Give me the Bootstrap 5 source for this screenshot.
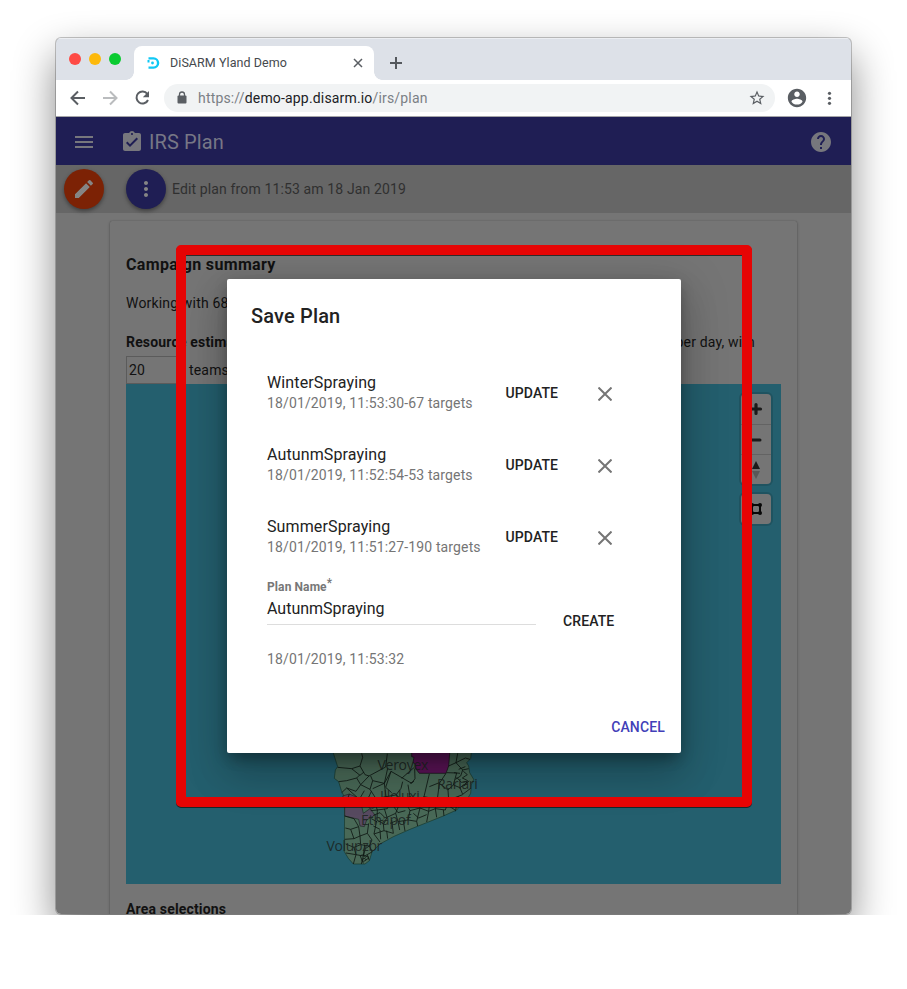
<!DOCTYPE html>
<html lang="en">
<head>
<meta charset="utf-8">
<title>DiSARM Yland Demo</title>
<link rel="stylesheet" href="https://cdn.jsdelivr.net/npm/bootstrap@5.3.0/dist/css/bootstrap.min.css">
<style>
body{background:#fff;font-family:Roboto,sans-serif;color:#111;overflow:hidden}
svg{display:block;flex:none}
.stage{height:915px;padding:38px 56px 0;overflow:hidden}
.browser{width:795px;height:876px;border-radius:5px;overflow:visible;box-shadow:0 0 0 1px rgba(0,0,0,.22),0 18px 42px rgba(0,0,0,.48)}
.browser-clip{height:876px;border-radius:5px;overflow:hidden;background:#757575}
.tabstrip{height:42px;background:#dde1e8;box-shadow:inset 0 1px #eceef2;padding-left:13px}
.lights{gap:8px;height:42px;width:65px}
.light{width:12px;height:12px;border-radius:50%}
.page-tab{width:240px;height:34px;margin-top:8px;background:#fff;border-radius:8px 8px 0 0;padding:0 10px 0 13px;font-size:12.5px;letter-spacing:.07px;color:#45494d}
.page-tab::before,.page-tab::after{content:"";position:absolute;bottom:0;width:8px;height:8px}
.page-tab::before{left:-8px;background:radial-gradient(circle at 0 0,transparent 7.5px,#fff 8px)}
.page-tab::after{right:-8px;background:radial-gradient(circle at 100% 0,transparent 7.5px,#fff 8px)}
.toolbar{height:37px;background:#fff;border-bottom:1px solid #a5a5a8;padding-left:13px}
.omnibox{width:611px;height:28px;border-radius:14px;background:#f1f3f4;margin-left:13px;padding:0 9px 0 13px;font-size:14px;letter-spacing:.17px;color:#7b8085}
.omnibox b{font-weight:400;color:#202124}
.appbar{height:48px;background:#1f1e54;padding:1px 18px 0 16px;color:#777786;font-size:20px;letter-spacing:.1px}
.subbar{height:48px;background:#666;padding-left:8px;font-size:14px;letter-spacing:.13px;color:#303030}
.fab{width:40px;height:40px;border-radius:50%;box-shadow:0 2px 4px rgba(0,0,0,.4)}
.sheet{width:687px;height:720px;margin:8px 0 0 54px;padding:0 16px;border-radius:2px;background:#757575;box-shadow:0 1px 3px rgba(0,0,0,.3),0 0 1px rgba(0,0,0,.3);font-size:14px;letter-spacing:.17px;line-height:20px}
.sheet h2{font-size:16px;font-weight:700;letter-spacing:.34px;line-height:20px;margin:34px 0 0}
.sheet b{font-weight:700}
.line-a{margin-top:18px}
.line-b{margin-top:19px}
.team-row{height:28px;margin-top:4px}
.team-input{width:60px;height:28px;border:1px solid #5b5b5b;padding-left:2px}
.map{width:655px;height:500px;background:#245f6e}
.ctl{background:#757575;border-radius:4px;box-shadow:0 0 0 2px rgba(0,0,0,.12);width:30px;left:615px}
.ctl>div{height:30px}
.ctl>div+div{border-top:1px solid #636363}
.frame-red{left:176px;top:245px;width:576px;height:562px;border:10px solid #e60404;border-radius:5px;filter:drop-shadow(0 1px 0 rgba(20,20,20,.75))}
.dialog{left:227px;top:279px;width:454px;height:474px;background:#fff;border-radius:2px;padding:22px 16px 0 24px;box-shadow:0 11px 15px -7px rgba(0,0,0,.2),0 24px 38px 3px rgba(0,0,0,.14),0 9px 46px 8px rgba(0,0,0,.12),0 5px 14px rgba(0,0,0,.2);color:#222}
.dialog h1{font-size:20px;font-weight:500;letter-spacing:.15px;line-height:30px;margin:0 0 27px}
.plan{height:72px;padding-left:16px}
.plan-text{width:238.500px}
.plan-name{font-size:16px;line-height:24px;letter-spacing:.12px;margin-top:-6px}
.plan-meta{font-size:14px;line-height:17px;letter-spacing:.13px;color:#757575}
.act{font-size:14px;font-weight:500;letter-spacing:.1px;line-height:20px;background:none;border:0;padding:0;color:#222}
.plan .act{width:92px;text-align:left;margin-top:-2px}
.field{width:269px;height:51px;margin-left:16px;border-bottom:1px solid #ddd}
.field label{font-size:12px;font-weight:700;color:#777;line-height:16px;letter-spacing:.1px}
.field label sup{font-size:12px;top:-4px;font-weight:500;line-height:0;vertical-align:baseline}
.field div{font-size:16px;line-height:22px}
.act.cancel{color:#423fb8;letter-spacing:.15px}
</style>
<script src="https://cdn.jsdelivr.net/npm/bootstrap@5.3.0/dist/js/bootstrap.bundle.min.js"></script>
</head>
<body>
<div class="stage position-relative">
 <div class="browser"><div class="browser-clip">
  <div class="tabstrip d-flex">
   <div class="lights d-flex align-items-center">
    <span class="light" style="background:#fe4a45"></span><span class="light" style="background:#fdb90b"></span><span class="light" style="background:#0acb31"></span>
   </div>
   <div class="page-tab position-relative d-flex align-items-center">
    <svg width="13" height="14" viewBox="0 0 13 14" fill="none" stroke="#0fc8f5" stroke-width="2.400"><path d="M1.500 2.400H6.500a4.600 4.600 0 0 1 0 9.200H1.500M.500 5.200h2"/><circle cx="5.500" cy="7" r="1.400" fill="#0fc8f5" stroke="none"/></svg>
    <span class="ms-auto tab-title" style="width:182px">DiSARM Yland Demo</span>
    <svg width="12" height="12" viewBox="0 0 12 12" stroke="#5a5e63" stroke-width="1.500"><path d="M2 2l8 8M10 2l-8 8"/></svg>
   </div>
   <svg class="ms-3 mt-3" width="12" height="18" viewBox="0 0 12 18" stroke="#54585d" stroke-width="2"><path d="M6 3v12M0 9h12"/></svg>
  </div>
  <div class="toolbar d-flex align-items-center">
   <svg width="18" height="18" viewBox="0 0 18 18" fill="none" stroke="#5a5e63" stroke-width="2"><path d="M16 9H3M9 2.500L2.500 9 9 15.500"/></svg>
   <svg style="margin-left:14px" width="18" height="18" viewBox="0 0 18 18" fill="none" stroke="#babcbe" stroke-width="2"><path d="M2 9h13M9 2.500L15.500 9 9 15.500"/></svg>
   <svg style="margin-left:14px" width="18" height="18" viewBox="0 0 18 18"><path d="M14.300 4.900A6 6 0 1 0 15 11" fill="none" stroke="#5a5e63" stroke-width="2"/><path d="M16 2v6.200H9.800z" fill="#5a5e63"/></svg>
   <div class="omnibox d-flex align-items-center">
    <svg width="10" height="14" viewBox="0.500 0 10 14"><rect x="1" y="4.500" width="9" height="8" rx="1" fill="#5a5e63"/><path d="M3 5V3.500a2.500 2.500 0 0 1 5 0V5" fill="none" stroke="#5a5e63" stroke-width="1.300"/></svg>
    <span class="url" style="margin-left:11px">https://<b>demo-app.disarm.io</b>/irs/plan</span>
    <svg class="ms-auto" width="18" height="18" viewBox="0 0 24 24" fill="#5a5e63"><path d="M22 9.240l-7.190-.62L12 2 9.190 8.630 2 9.240l5.460 4.730L5.820 21 12 17.270 18.180 21l-1.630-7.030L22 9.240zM12 15.400l-3.760 2.270 1-4.280-3.320-2.880 4.380-.38L12 6.100l1.710 4.040 4.380.38-3.320 2.880 1 4.280L12 15.400z"/></svg>
   </div>
   <svg style="margin-left:11px" width="22" height="22" viewBox="0 0 24 24" fill="#5a5e63"><path d="M12 2C6.480 2 2 6.480 2 12s4.480 10 10 10 10-4.480 10-10S17.520 2 12 2zm0 3c1.660 0 3 1.340 3 3s-1.340 3-3 3-3-1.340-3-3 1.340-3 3-3zm0 14.200c-2.500 0-4.710-1.280-6-3.220.03-1.990 4-3.080 6-3.080 1.990 0 5.970 1.090 6 3.080-1.290 1.940-3.500 3.220-6 3.220z"/></svg>
   <svg style="margin-left:19px" width="5" height="16" viewBox="0 0 5 16" fill="#5a5e63"><circle cx="2.500" cy="3.300" r="1.600"/><circle cx="2.500" cy="8.300" r="1.600"/><circle cx="2.500" cy="13.300" r="1.600"/></svg>
  </div>
  <header class="appbar d-flex align-items-center">
   <svg width="24" height="24" viewBox="0 0 24 24" fill="#77777d"><path d="M3 18h18v-2H3v2zm0-5h18v-2H3v2zm0-7v2h18V6H3z"/></svg>
   <svg style="margin-left:24px" width="24" height="24" viewBox="0 0 24 24" fill="#77777d"><path d="M19 3h-4.180C14.400 1.840 13.300 1 12 1c-1.300 0-2.400.84-2.820 2H5c-1.100 0-2 .9-2 2v14c0 1.100.9 2 2 2h14c1.100 0 2-.9 2-2V5c0-1.100-.9-2-2-2zm-7 0c.55 0 1 .45 1 1s-.45 1-1 1-1-.45-1-1 .45-1 1-1zm-2 14l-4-4 1.410-1.410L10 14.170l6.590-6.590L18 9l-8 8z"/></svg>
   <span class="app-title" style="margin-left:5px">IRS Plan</span>
   <svg class="ms-auto" width="24" height="24" viewBox="0 0 24 24" fill="#77777d"><path d="M12 2C6.480 2 2 6.480 2 12s4.480 10 10 10 10-4.480 10-10S17.520 2 12 2zm1 17h-2v-2h2v2zm2.070-7.750l-.9.920C13.450 12.900 13 13.500 13 15h-2v-.5c0-1.100.45-2.100 1.170-2.830l1.240-1.260c.37-.36.59-.86.59-1.410 0-1.100-.9-2-2-2s-2 .9-2 2H8c0-2.210 1.790-4 4-4s4 1.790 4 4c0 .88-.36 1.680-.93 2.250z"/></svg>
  </header>
  <div class="subbar d-flex align-items-center">
   <div class="fab d-flex align-items-center justify-content-center" style="background:#7c2205"><svg width="24" height="24" viewBox="0 0 24 24" fill="#858585"><path d="M3 17.250V21h3.750L17.810 9.940l-3.750-3.750L3 17.250zM20.710 7.040a1 1 0 0 0 0-1.410l-2.340-2.340a1 1 0 0 0-1.410 0l-1.830 1.830 3.750 3.750 1.830-1.830z"/></svg></div>
   <div class="fab d-flex align-items-center justify-content-center" style="background:#1f1e54;margin-left:22px"><svg width="24" height="24" viewBox="0 0 24 24" fill="#858585"><path d="M12 8c1.100 0 2-.9 2-2s-.9-2-2-2-2 .9-2 2 .9 2 2 2zm0 2c-1.100 0-2 .9-2 2s.9 2 2 2 2-.9 2-2-.9-2-2-2zm0 6c-1.100 0-2 .9-2 2s.9 2 2 2 2-.9 2-2-.9-2-2-2z"/></svg></div>
   <span style="margin-left:6px">Edit plan from 11:53 am 18 Jan 2019</span>
  </div>
  <main class="sheet d-flow-root overflow-hidden">
   <h2>Campaign summary</h2>
   <div class="line-a">Working with 68</div>
   <div class="line-b d-flex"><b>Resource estimate</b><span class="ms-auto" style="margin-right:26px">per day, with</span></div>
   <div class="team-row d-flex align-items-center"><div class="team-input d-flex align-items-center">20</div><span style="margin-left:3px">teams</span></div>
   <div class="map position-relative">
    <svg width="655" height="500" viewBox="126 384 655 500">
     <g transform="translate(310 740) scale(.33333)" stroke-linejoin="round">
      <path fill="#496957" stroke="#17382a" stroke-width="2" d="M67 30L83 80 76 90 73 115 86 125 95 155 104 172 103 335 115 355 130 372 165 372 178 362 186 336 210 312 250 290 300 268 350 248 400 228 440 210 450 198 470 180 482 160 484 135 491 118 479 98 476 78 470 68 482 56 485 30z"/>
      <path fill="#5c1558" stroke="#111" stroke-width="2" d="M305 30L305 50 312 52 309 67 317 75 317 86 328 100 408 100 416 78 420 30z"/>
      <path fill="#574a60" stroke="#1c2822" stroke-width="2" d="M98 168L118 162 150 176 160 220 180 206 195 225 170 240 163 260 150 258 146 238 104 228 104 178zM160 190l20-8 14 20-10 5z"/>
      <g fill="none" stroke="#101a15" stroke-width="2.600">
       <path d="M83 82L125 86 150 78 158 52 155 40M125 86l25 20 12-10M150 78l15 26 12 4 50-27 5-40M177 108l-25 26-12-20-30 8-24 3M140 114l10-10M152 134l-14 20-28-10-15 14M152 134l28 14 8-26-6-14M188 122l35 8 10-45M188 146l35-16 20-36 62 36 10-14-1-30M243 94l-16 48 18 16M275 115l25-22 12-10M223 130l5 40-30 6-18-28M228 170l30-5 15-20 5-20M258 165l20 15 22-10-6-36M300 170l22 12 20-12 16-68M342 170l40 8 6-48 20-30M358 140l30-12M300 130l12-6M388 130l26 20 16-15 10-36-30-1M416 78l22-10 5-28M438 68l20 22-6 18-16 10M438 68l28-14 14 4M458 90l18-4M430 135l20 8 28-20M450 143l8 20 24-18M414 150l2 30 42-16M416 180l28 16M382 178l-6 28 30 4 10-30M110 144l38 34 15-26M118 162l-15 40M148 178l28-6 8-18M176 172l18 16 34-18M194 188l8 22-20 2M202 210l30-4 8-20-12-16M240 186l25 14-8 20M265 200l25-8-12-12M290 192l10 20 30-8-8-22M330 204l26 10 20-8M356 214l-6 32M376 206l4 26M300 212l-6 28 26 4 10-40M294 240l-30 5-7-25M257 220l-26 12-8-26M231 232l-10 20-20-12 1-30M264 245l5 25M245 240l5 40-28-8-2-20M222 272l-30 10 8-40M192 282l18 24M104 228l28 8 14 24-24 8-16-4M146 260l4 28-18 8-10-28M150 288l22-8 4-30M172 280l14 20-8 18-26-4-2-26M152 314l-20 8-25-10M132 322l6 22-30-5M138 344l22 4 4-34M138 344l-8 28M160 348l6-22 12-8 8 18-22 12M160 348l-6 24M172 346l6 15M150 346l10 24M132 296l-28 2M205 245l15-5M190 258l20 10M240 250l20-8M210 270l2 28M230 272l3 24M280 243l5 30M320 244l3 14M440 196l-4 18M400 210l2 18M420 200l15 10M445 170l15 12M460 94l12 10-15 10 16 8-10 16M450 100l-18-2M466 80l-20 8M440 112l14 15 16-2"/>
       <path d="M153 346l9-2 4 8 7-5 3 8-8 4-6-5-5 7M155 360l6 4 8-4M190 226l20-8 14 14M184 236l18 10M250 198l14 20 22-6M310 220l16 14 24-10M335 190l25 12M360 180l-4 34"/>
      </g>
     </g>
     <g font-family="Open Sans, sans-serif" font-size="14" fill="#1c2522" fill-opacity=".9">
      <text x="377.500" y="770" textLength="51">Veroyex</text><text x="437" y="788.500" textLength="41">Rariari</text><text x="380" y="801" textLength="40">Illoluxi</text><text x="361" y="825" textLength="50">Ethapof</text><text x="326.500" y="851" textLength="56">Volupzbr</text>
     </g>
    </svg>
    <div class="ctl position-absolute" style="top:10px">
     <div class="d-flex align-items-center justify-content-center"><svg width="14" height="14" viewBox="0 0 14 14" stroke="#1b1b1b" stroke-width="3.200" stroke-linecap="round"><path d="M7 2.500v9M2.500 7h9"/></svg></div>
     <div class="d-flex align-items-center justify-content-center"><svg width="14" height="14" viewBox="0 0 14 14" stroke="#1b1b1b" stroke-width="3" stroke-linecap="round"><path d="M2.500 7h8.500"/></svg></div>
     <div class="d-flex align-items-center justify-content-center"><svg width="10" height="18" viewBox="0 0 10 18"><path d="M1 8l4-8 4 8z" fill="#1b1b1b"/><path d="M1 10l4 8 4-8z" fill="#585858"/></svg></div>
    </div>
    <div class="ctl position-absolute" style="top:110px">
     <div class="d-flex align-items-center justify-content-center"><svg width="14" height="14" viewBox="0 0 14 14" fill="#080808"><path d="M3 3h8v8H3z" fill="none" stroke="#080808" stroke-width="2"/><circle cx="3" cy="3" r="2"/><circle cx="11" cy="3" r="2"/><circle cx="3" cy="11" r="2"/><circle cx="11" cy="11" r="2"/></svg></div>
    </div>
   </div>
   <div style="margin-top:15px"><b>Area selections</b></div>
  </main>
 </div></div>
 <section class="dialog position-absolute">
  <h1>Save Plan</h1>
  <div class="plan d-flex align-items-center"><div class="plan-text"><div class="plan-name">WinterSpraying</div><div class="plan-meta">18/01/2019, 11:53:30-67 targets</div></div><button class="act">UPDATE</button><svg width="14" height="14" viewBox="0 0 14 14" stroke="#757575" stroke-width="2"><path d="M.5.500l13 13M13.500.500l-13 13"/></svg></div>
  <div class="plan d-flex align-items-center"><div class="plan-text"><div class="plan-name">AutunmSpraying</div><div class="plan-meta">18/01/2019, 11:52:54-53 targets</div></div><button class="act">UPDATE</button><svg width="14" height="14" viewBox="0 0 14 14" stroke="#757575" stroke-width="2"><path d="M.5.500l13 13M13.500.500l-13 13"/></svg></div>
  <div class="plan d-flex align-items-center"><div class="plan-text"><div class="plan-name">SummerSpraying</div><div class="plan-meta">18/01/2019, 11:51:27-190 targets</div></div><button class="act">UPDATE</button><svg width="14" height="14" viewBox="0 0 14 14" stroke="#757575" stroke-width="2"><path d="M.5.500l13 13M13.500.500l-13 13"/></svg></div>
  <div class="d-flex align-items-end">
   <div class="field d-flex flex-column"><label style="margin-top:5px">Plan Name<sup>*</sup></label><div style="margin-top:3px">AutunmSpraying</div></div>
   <button class="act" style="margin:0 0 -6px 27px">CREATE</button>
  </div>
  <div class="plan-meta ps-3" style="margin-top:26px">18/01/2019, 11:53:32</div>
  <div class="text-end" style="margin-top:47px"><button class="act cancel">CANCEL</button></div>
 </section>
 <div class="frame-red position-absolute"></div>
</div>
</body>
</html>
